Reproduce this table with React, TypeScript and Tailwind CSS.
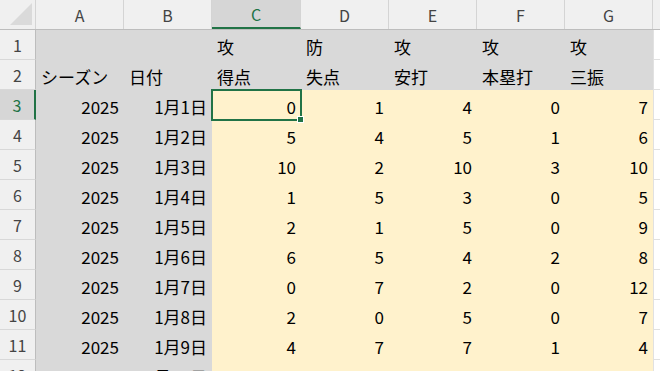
import React from 'react'

const cols = ['A', 'B', 'C', 'D', 'E', 'F', 'G']
const widths = ['w-[88px]', 'w-[88px]', 'w-[89px]', 'w-[88px]', 'w-[88px]', 'w-[88px]', 'w-[88px]']

const head1 = ['', '', '攻', '防', '攻', '攻', '攻']
const head2 = ['シーズン', '日付', '得点', '失点', '安打', '本塁打', '三振']

const data: (string | number)[][] = [
  [2025, '1月1日', 0, 1, 4, 0, 7],
  [2025, '1月2日', 5, 4, 5, 1, 6],
  [2025, '1月3日', 10, 2, 10, 3, 10],
  [2025, '1月4日', 1, 5, 3, 0, 5],
  [2025, '1月5日', 2, 1, 5, 0, 9],
  [2025, '1月6日', 6, 5, 4, 2, 8],
  [2025, '1月7日', 0, 7, 2, 0, 12],
  [2025, '1月8日', 2, 0, 5, 0, 7],
  [2025, '1月9日', 4, 7, 7, 1, 4],
  [2025, '1月10日', 5, 1, 5, 0, 3],
]

function RowHead({ n, active }: { n: number; active?: boolean }) {
  return (
    <div
      className={
        'w-[36px] shrink-0 h-full flex items-center justify-center text-[16px] border-b border-b-[#d8d8d8] ' +
        (active
          ? 'bg-[#d6d6d6] text-[#217346] border-r-2 border-r-[#217346]'
          : 'bg-[#f0f0f0] text-[#444] border-r border-r-[#bdbdbd]')
      }
    >
      {n}
    </div>
  )
}

function Cell({ w, fill, right, children }: { w: string; fill: string; right?: boolean; children?: React.ReactNode }) {
  return (
    <div
      className={
        w +
        ' shrink-0 h-full flex items-center pt-[3px] text-[17px] text-black whitespace-nowrap overflow-visible ' +
        fill +
        (right ? ' justify-end pr-[5px]' : ' justify-start pl-[5px]')
      }
    >
      {children}
    </div>
  )
}

export default function App() {
  return (
    <div className="w-[660px] h-[371px] overflow-hidden bg-white relative font-['Noto_Sans_CJK_JP','Noto_Sans',sans-serif] leading-none">
      {/* column header */}
      <div className="flex h-[30px] bg-[#f0f0f0] border-b border-b-[#bdbdbd]">
        <div className="w-[36px] shrink-0 h-full border-r border-r-[#d4d4d4] flex items-end justify-end pr-[3px] pb-[4px]">
          <svg width="22" height="22" viewBox="0 0 22 22">
            <polygon points="22,0 22,22 0,22" fill="#dadada" />
          </svg>
        </div>
        {cols.map((c, i) => (
          <div
            key={c}
            className={
              widths[i] +
              ' shrink-0 h-full flex items-center justify-center text-[16px] border-r border-r-[#d4d4d4] ' +
              (c === 'C' ? 'bg-[#d6d6d6] text-[#217346] border-b-2 border-b-[#217346]' : 'text-[#444]')
            }
          >
            {c}
          </div>
        ))}
        <div className="flex-1 h-full" />
      </div>

      {/* header rows */}
      {[head1, head2].map((row, r) => (
        <div key={r} className="flex h-[30px]">
          <RowHead n={r + 1} />
          {row.map((t, i) => (
            <Cell key={i} w={widths[i]} fill="bg-[#d9d9d9]">
              {t}
            </Cell>
          ))}
          <div className="flex-1 h-full border-b border-b-[#e1e1e1] border-l border-l-[#e1e1e1]" />
        </div>
      ))}

      {/* data rows */}
      {data.map((row, r) => (
        <div key={r} className="flex h-[30px]">
          <RowHead n={r + 3} active={r === 0} />
          {row.map((v, i) => (
            <Cell key={i} w={widths[i]} fill={i < 2 ? 'bg-[#d9d9d9]' : 'bg-[#fff2cc]'} right>
              {v}
            </Cell>
          ))}
          <div className="flex-1 h-full border-b border-b-[#e1e1e1] border-l border-l-[#e1e1e1]" />
        </div>
      ))}

      {/* active cell C3 */}
      <div className="absolute left-[211px] top-[89px] w-[91px] h-[32px] border-2 border-[#217346] pointer-events-none">
        <div className="absolute -right-[4px] -bottom-[4px] w-[7px] h-[7px] bg-[#217346] border border-white" />
      </div>
    </div>
  )
}
